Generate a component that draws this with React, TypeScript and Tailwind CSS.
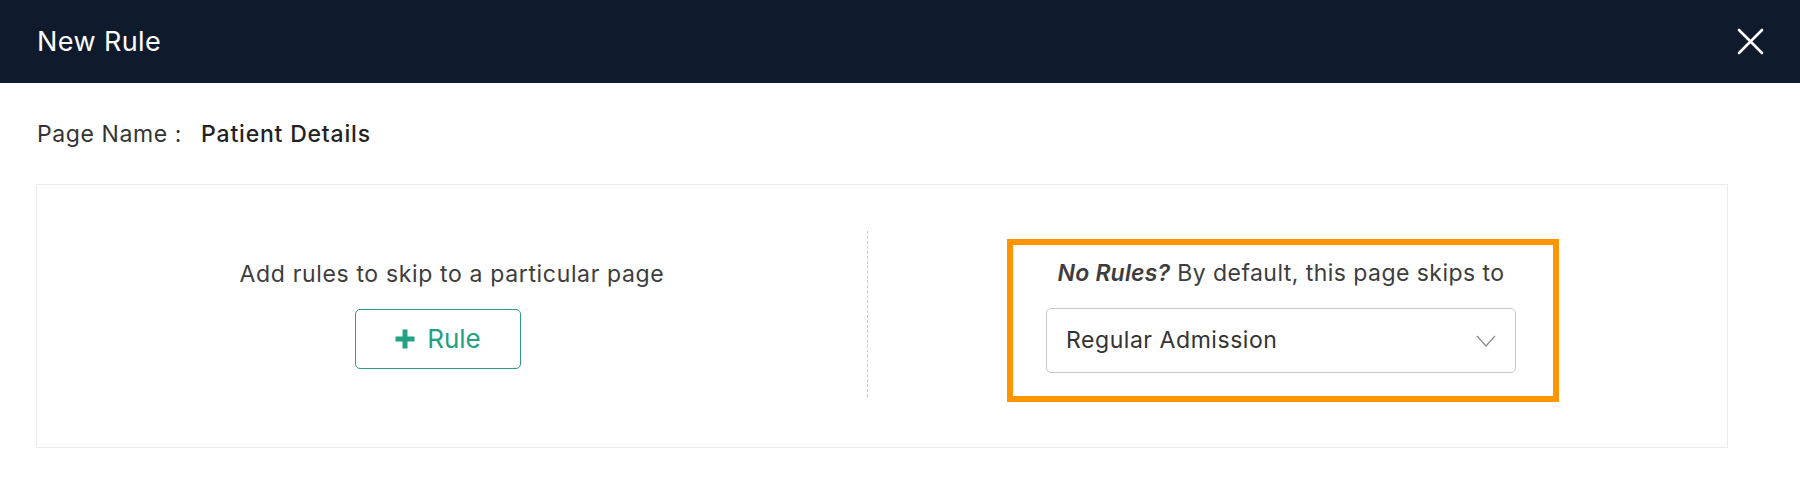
function CloseIcon() {
  return (
    <svg width="27" height="27" viewBox="0 0 27 27" fill="none">
      <path d="M2 2 L25 25 M25 2 L2 25" stroke="#ffffff" strokeWidth="2.6" strokeLinecap="round" />
    </svg>
  );
}

function Chevron() {
  return (
    <svg width="20" height="12" viewBox="0 0 20 12" fill="none">
      <path d="M1 1 L10 11 L19 1" stroke="#8a8a8a" strokeWidth="1.2" />
    </svg>
  );
}

function Plus() {
  return (
    <svg width="20" height="20" viewBox="0 0 20 20" fill="none">
      <path d="M10 0.5 V19.5 M0.5 10 H19.5" stroke="#23a085" strokeWidth="5" />
    </svg>
  );
}

export default function App() {
  return (
    <div className="w-[1800px] h-[492px] bg-white font-['Inter','Noto_Sans',sans-serif] text-[#3d3d3d]">
      {/* header */}
      <div className="h-[83px] bg-[#0f1b2d] flex items-center justify-between pl-[37px] pr-[36px]">
        <span className="text-[27px] tracking-[0.4px] text-white leading-none">New Rule</span>
        <CloseIcon />
      </div>

      {/* page name */}
      <div className="mt-[37px] ml-[37px] h-[28px] flex items-center text-[23px] leading-[28px] tracking-[0.6px]">
        <span className="text-[#333]">Page Name :</span>
        <span className="ml-[19px] font-medium tracking-[0.8px] text-[#222]">Patient Details</span>
      </div>

      {/* card */}
      <div className="mt-[36px] ml-[36px] w-[1692px] h-[264px] border border-[#ebebeb] flex items-start">
        <div className="w-[830px] pt-[75px] flex flex-col items-center">
          <p className="text-[23px] leading-[28px] tracking-[0.65px]">Add rules to skip to a particular page</p>
          <button className="mt-[21px] mr-[28px] w-[166px] h-[60px] rounded-[5px] border border-[#2e9e86] flex items-center justify-center gap-[12px] text-[26px] text-[#23a085]">
            <Plus />
            <span className="leading-none">Rule</span>
          </button>
        </div>

        <div className="mt-[46px] h-[166px] border-l border-dashed border-[#c8c8c8]" />

        <div className="ml-[139px] mt-[54px] w-[552px] h-[163px] border-[6px] border-[#ff9500] pt-[14px] pl-[33px] pr-[37px] flex flex-col items-center">
          <p className="text-[23px] leading-[28px] tracking-[0.45px] whitespace-nowrap">
            <span className="italic font-semibold tracking-[0.2px]">No Rules?</span> By default, this page skips to
          </p>
          <div className="mt-[21px] w-[470px] h-[65px] rounded-[5px] border border-[#c9c9c9] flex items-center justify-between pl-[19px] pr-[19px]">
            <span className="text-[23px] tracking-[0.55px] text-[#333]">Regular Admission</span>
            <Chevron />
          </div>
        </div>
      </div>
    </div>
  );
}
